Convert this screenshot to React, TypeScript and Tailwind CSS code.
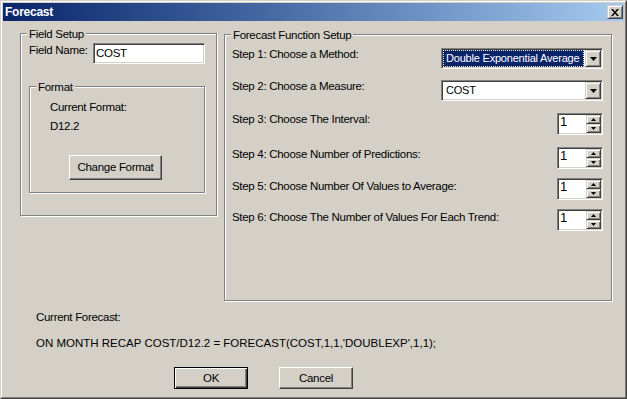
import React from "react";

const sunken =
  "border border-t-[#808080] border-l-[#808080] border-r-white border-b-white shadow-[inset_1px_1px_0_#404040,inset_-1px_-1px_0_#d4d0c8]";
const raisedSmall =
  "border border-t-[#d4d0c8] border-l-[#d4d0c8] border-r-[#404040] border-b-[#404040] shadow-[inset_1px_1px_0_#fff,inset_-1px_-1px_0_#808080]";
const pushBtn =
  "border border-t-white border-l-white border-r-[#404040] border-b-[#404040] shadow-[inset_-1px_-1px_0_#808080] bg-[#d4d0c8] flex items-center justify-center";

function Group({
  label,
  className = "",
  children,
}: {
  label: string;
  className?: string;
  children?: React.ReactNode;
}) {
  return (
    <div
      className={`relative border border-[#808080] shadow-[inset_1px_1px_0_#fff,1px_1px_0_#fff] ${className}`}
    >
      <span className="absolute -top-[6px] left-[6px] bg-[#d4d0c8] px-[2px] leading-[13px] whitespace-nowrap">
        {label}
      </span>
      {children}
    </div>
  );
}

function DownTri() {
  return (
    <svg width="7" height="4" viewBox="0 0 7 4">
      <polygon points="0,0 7,0 3.5,4" fill="#000" />
    </svg>
  );
}

function SmallTri({ up }: { up?: boolean }) {
  return (
    <svg width="5" height="3" viewBox="0 0 5 3">
      {up ? (
        <polygon points="2.5,0 5,3 0,3" fill="#000" />
      ) : (
        <polygon points="0,0 5,0 2.5,3" fill="#000" />
      )}
    </svg>
  );
}

function Combo({ text, selected }: { text: string; selected?: boolean }) {
  return (
    <div className={`w-[162px] h-[21px] bg-white ${sunken} p-px flex text-[11px] tracking-[-0.2px]`}>
      {selected ? (
        <div className="flex-1 mr-px bg-[#0a246a] text-white border border-dotted border-[#f3eec0] pl-[2px] flex items-center whitespace-nowrap overflow-hidden">
          {text}
        </div>
      ) : (
        <div className="flex-1 mr-px pl-[3px] flex items-center whitespace-nowrap overflow-hidden">
          {text}
        </div>
      )}
      <div className={`w-[16px] h-full bg-[#d4d0c8] ${raisedSmall} flex items-center justify-center`}>
        <DownTri />
      </div>
    </div>
  );
}

function Spinner() {
  return (
    <div className={`w-[46px] h-[22px] bg-white ${sunken} p-px flex`}>
      <div className="flex-1 pl-px text-[13px] leading-[14px] tracking-normal">1</div>
      <div className="w-[15px] flex flex-col">
        <div className={`flex-1 bg-[#d4d0c8] ${raisedSmall} flex items-center justify-center`}>
          <SmallTri up />
        </div>
        <div className={`flex-1 bg-[#d4d0c8] ${raisedSmall} flex items-center justify-center`}>
          <SmallTri />
        </div>
      </div>
    </div>
  );
}

function Row({
  label,
  className = "",
  labelClass = "",
  children,
}: {
  label: string;
  className?: string;
  labelClass?: string;
  children: React.ReactNode;
}) {
  return (
    <div className={`flex justify-between items-start ${className}`}>
      <span className={`whitespace-nowrap ${labelClass}`}>{label}</span>
      {children}
    </div>
  );
}

export default function App() {
  return (
    <div className="w-[627px] h-[399px] bg-[#d4d0c8] border border-t-[#d4d0c8] border-l-[#d4d0c8] border-r-[#404040] border-b-[#404040] font-['Liberation_Sans',Arial,sans-serif] text-black text-[11.5px] leading-[13px] tracking-[-0.3px] overflow-hidden">
      <div className="h-full border border-t-white border-l-white border-r-[#808080] border-b-[#808080] p-px flex flex-col">
        {/* Title bar */}
        <div className="h-[18px] shrink-0 flex items-center justify-between bg-linear-to-r from-[#0a246a] to-[#a6caf0] pl-[2px] pr-px">
          <span className="text-white font-bold text-[12px] tracking-[-0.25px] leading-[14px]">
            Forecast
          </span>
          <div className={`w-[16px] h-[14px] ${raisedSmall} bg-[#d4d0c8] flex items-center justify-center`}>
            <svg width="8" height="7" viewBox="0 0 8 7">
              <path
                d="M0 0 L2 0 L4 2.5 L6 0 L8 0 L5 3.5 L8 7 L6 7 L4 4.5 L2 7 L0 7 L3 3.5 Z"
                fill="#000"
              />
            </svg>
          </div>
        </div>

        {/* Body */}
        <div className="flex-1 flex flex-col pl-[17px] pr-[12px]">
          <div className="flex items-start gap-[7px] mt-[12px]">
            <Group label="Field Setup" className="w-[197px] h-[183px] shrink-0 pt-[9px] pl-[8px] pr-[11px]">
              <div className="flex justify-between items-start">
                <span className="mt-px whitespace-nowrap">Field Name:</span>
                <div className={`w-[112px] h-[21px] bg-white ${sunken} pl-[2px] flex items-center`}>
                  COST
                </div>
              </div>
              <Group label="Format" className="mt-[22px] h-[107px] pt-[14px] pl-[20px]">
                <div>Current Format:</div>
                <div className="mt-[6px]">D12.2</div>
                <div className={`ml-[19px] mt-[22px] w-[93px] h-[25px] ${pushBtn}`}>Change Format</div>
              </Group>
            </Group>

            <Group label="Forecast Function Setup" className="flex-1 h-[267px] mt-px pt-[13px] pl-[7px] pr-[8px]">
              <Row label="Step 1: Choose a Method:">
                <Combo text="Double Exponential Average" selected />
              </Row>
              <Row label="Step 2: Choose a Measure:" className="mt-[11px]">
                <Combo text="COST" />
              </Row>
              <Row label="Step 3: Choose The Interval:" className="mt-[12px]">
                <Spinner />
              </Row>
              <Row label="Step 4: Choose Number of Predictions:" className="mt-[12px]" labelClass="mt-px">
                <Spinner />
              </Row>
              <Row label="Step 5: Choose Number Of Values to Average:" className="mt-[9px]" labelClass="mt-[2px]">
                <Spinner />
              </Row>
              <Row label="Step 6: Choose The Number of Values For Each Trend:" className="mt-[9px]" labelClass="mt-[2px]">
                <Spinner />
              </Row>
            </Group>
          </div>

          <div className="ml-[16px] mt-[10px]">Current Forecast:</div>
          <div className="ml-[16px] mt-[13px] text-[11.5px] tracking-normal whitespace-nowrap">
            ON MONTH RECAP COST/D12.2 = FORECAST(COST,1,1,'DOUBLEXP',1,1);
          </div>

          <div className="flex mt-[17px] ml-[154px] gap-[31px]">
            <div className="w-[74px] h-[22px] bg-[#d4d0c8] border border-black shadow-[inset_1px_1px_0_#fff,inset_-1px_-1px_0_#404040,inset_-2px_-2px_0_#808080] flex items-center justify-center">
              OK
            </div>
            <div className={`w-[74px] h-[22px] ${pushBtn}`}>Cancel</div>
          </div>
        </div>
      </div>
    </div>
  );
}
